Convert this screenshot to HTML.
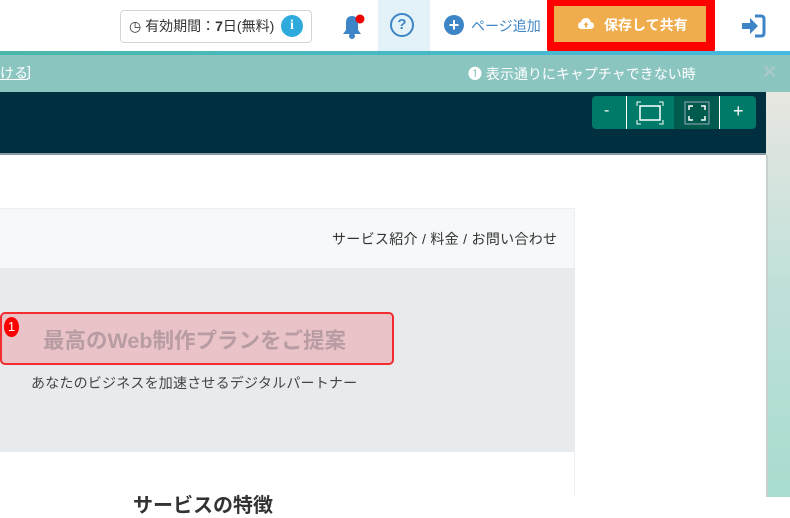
<!DOCTYPE html>
<html><head><meta charset="utf-8"><style>
*{margin:0;padding:0;box-sizing:border-box}
body{width:790px;height:497px;overflow:hidden;background:#fff;font-family:"Liberation Sans","Noto Sans CJK JP",sans-serif;position:relative}
.a{position:absolute}
</style></head><body>
<div class="a" style="left:120px;top:10px;width:192px;height:33px;border:1px solid #d5d5d5;border-radius:4px;background:#fff"></div>
<div class="a" style="left:129px;top:16px;font-size:14px;color:#333;white-space:nowrap">◷ 有効期間：<b>7</b>日(無料)</div>
<div class="a" style="left:281px;top:15px;width:22px;height:22px;border-radius:50%;background:#2eaadc;color:#fff;font-weight:bold;font-size:14px;text-align:center;line-height:22px;font-family:'Liberation Serif',serif">i</div>
<svg class="a" style="left:338px;top:11px" width="30" height="30" viewBox="0 0 30 30"><path d="M5 23 L8 19 L8 12 Q8 5 14 5 Q20 5 20 12 L20 19 L23 23 Z" fill="#3d85c6"/><circle cx="14" cy="25" r="3" fill="#3d85c6"/><circle cx="22" cy="8" r="4.5" fill="#e00"/></svg>
<div class="a" style="left:378px;top:0;width:52px;height:52px;background:#e3f1f8"></div>
<div class="a" style="left:390px;top:13px;width:24px;height:24px;border:2.5px solid #3d85c6;border-radius:50%;color:#3d85c6;font-weight:bold;font-size:15px;text-align:center;line-height:19px">?</div>
<div class="a" style="left:444px;top:15px;width:20px;height:20px;border-radius:50%;background:#3d85c6;color:#fff;font-weight:bold;font-size:18px;text-align:center;line-height:20px">+</div>
<div class="a" style="left:471px;top:16px;font-size:14px;color:#3d85c6">ページ追加</div>
<div class="a" style="left:547px;top:0;width:168px;height:53px;background:#f00;border-radius:0 0 4px 4px"></div>
<div class="a" style="left:554px;top:6px;width:152px;height:36px;background:#efad4e"></div>
<svg class="a" style="left:578px;top:17px" width="16" height="14" viewBox="0 0 16 14"><path d="M4 12 Q0 12 0 8.5 Q0 5.5 3 5 Q4 1 8 1 Q12 1 12.5 5 Q16 5.5 16 8.5 Q16 12 12 12 Z" fill="#fff"/><path d="M8 5 L5.5 8 H7 V10.5 H9 V8 H10.5 Z" fill="#efad4e"/></svg>
<div class="a" style="left:604px;top:15px;font-size:14px;color:#fff;font-weight:bold">保存して共有</div>
<svg class="a" style="left:740px;top:14px" width="26" height="24" viewBox="0 0 26 24"><path d="M2 9 H10 V4 L18 12 L10 20 V15 H2 Z" fill="#3d85c6"/><path d="M15 2 H21 Q24 2 24 5 V19 Q24 22 21 22 H15" stroke="#3d85c6" stroke-width="3" fill="none"/></svg>
<div class="a" style="left:0;top:51px;width:790px;height:4px;background:linear-gradient(90deg,#4ab8a8,#45b8e0)"></div>
<div class="a" style="left:0;top:55px;width:790px;height:37px;background:#8bc5c0"></div>
<div class="a" style="left:0;top:63px;font-size:14px;color:#fff;text-decoration:underline">ける</div>
<div class="a" style="left:27px;top:63px;font-size:14px;color:#fff">]</div>
<div class="a" style="left:468px;top:64px;font-size:14px;color:#fff;white-space:nowrap">❶ 表示通りにキャプチャできない時</div>
<div class="a" style="left:762px;top:62px;font-size:18px;color:#a9c9c6;font-weight:bold">✕</div>
<div class="a" style="left:0;top:92px;width:790px;height:62px;background:#00303f"></div>
<div class="a" style="left:0;top:153px;width:768px;height:2px;background:#8a9aa2"></div>
<div class="a" style="left:592px;top:96px;width:164px;height:33px;background:#007a68;border-radius:4px"></div>
<div class="a" style="left:674px;top:96px;width:45px;height:33px;background:#005b4e"></div>
<div class="a" style="left:626px;top:96px;width:1px;height:33px;background:#fff"></div>
<div class="a" style="left:719px;top:96px;width:1px;height:33px;background:#fff"></div>
<div class="a" style="left:604px;top:102px;color:#fff;font-size:16px">-</div>
<div class="a" style="left:733px;top:101px;color:#fff;font-size:18px">+</div>
<svg class="a" style="left:636px;top:101px" width="28" height="24" viewBox="0 0 28 24"><rect x="4" y="5" width="20" height="14" fill="none" stroke="#fff" stroke-width="1.5"/><path d="M1 5V1H5M23 1H27V5M27 19V23H23M5 23H1V19" stroke="#fff" fill="none"/></svg>
<svg class="a" style="left:684px;top:101px" width="26" height="24" viewBox="0 0 26 24"><rect x="1" y="1" width="24" height="22" fill="none" stroke="#9ab" stroke-width="1"/><path d="M5 9V5H9M17 5H21V9M21 15V19H17M9 19H5V15" stroke="#fff" fill="none" stroke-width="1.5"/></svg>
<div class="a" style="left:766px;top:92px;width:24px;height:405px;background:linear-gradient(180deg,#e8e6e0,#bfe0da 50%,#a8dccf)"></div>
<div class="a" style="left:766px;top:155px;width:2px;height:342px;background:#c8d0d0"></div>
<div class="a" style="left:0;top:208px;width:575px;height:60px;background:#f7f8f9;border-top:1px solid #eceeef"></div>
<div class="a" style="left:574px;top:208px;width:1px;height:289px;background:#eceeef"></div>
<div class="a" style="left:332px;top:229px;font-size:14px;color:#333;white-space:nowrap;letter-spacing:0.3px">サービス紹介 / 料金 / お問い合わせ</div>
<div class="a" style="left:0;top:268px;width:575px;height:184px;background:#e8ebee"></div>
<div class="a" style="left:0;top:312px;width:394px;height:53px;background:#e9c3c8;border:2px solid #f32c30;border-radius:5px"></div>
<div class="a" style="left:4px;top:317px;width:15px;height:20px;border-radius:50%;background:#f00;color:#fff;font-size:13px;text-align:center;line-height:20px">1</div>
<div class="a" style="left:43px;top:324px;font-size:21.5px;font-weight:bold;color:#b89ca3;white-space:nowrap">最高のWeb制作プランをご提案</div>
<div class="a" style="left:31px;top:373px;font-size:14px;color:#444;white-space:nowrap;letter-spacing:0.2px">あなたのビジネスを加速させるデジタルパートナー</div>
<div class="a" style="left:133px;top:489px;font-size:20px;font-weight:bold;color:#333;white-space:nowrap">サービスの特徴</div>
</body></html>
